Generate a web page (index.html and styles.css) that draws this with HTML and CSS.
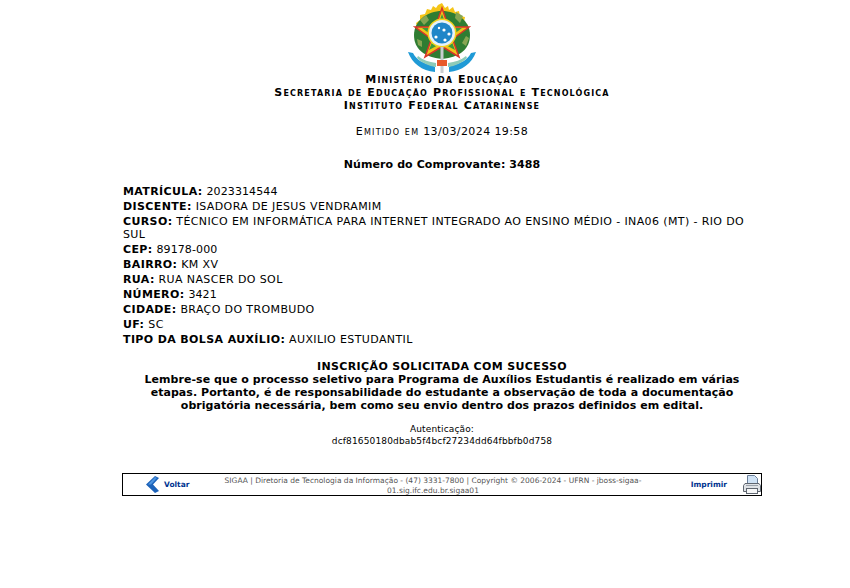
FILE: index.html
```html
<!DOCTYPE html>
<html lang="pt-BR">
<head>
    <meta charset="UTF-8">
    <title>Comprovante</title>
    <link rel="stylesheet" href="styles.css">
</head>
<body>
    <div class="container">
        <div class="header">
            <svg class="brasao" width="68" height="70" viewBox="0 0 68 70">
                <path d="M34 0l3 5 3-2 1 4 4-3 2 5 4-1 1 5 5 1-1 5 4 3-2 5-24 4-24-4-2-7 4-3 0-5 5-1 2-5 4 1 2-4 3 2 2-3z" fill="#f5c518"/>
                <path d="M34 8c15 0 28 10 28 24s-10 22-28 24c-18-2-28-10-28-24s13-24 28-24z" fill="#2f7d32"/>
                <path d="M12 17l6-5 3 5-5 5zM48 9l7 4-3 7-5-5zM9 36l5 2 0 6-4-2zM58 33l3 2-3 8-4-3z" fill="#86a552"/>
                <polygon points="34,5 40.500,24 61,24 44.500,36 51,54 34,43.500 17,54 23.500,36 7,24 27.500,24" fill="#f0c419" stroke="#d8342a" stroke-width="1.5"/>
                <polygon points="34,11 39,25 54,25 42,34 47,47 34,40 21,47 26,34 14,25 29,25" fill="#3c9a3c"/>
                <circle cx="34" cy="30" r="14.500" fill="#f4d21f"/>
                <circle cx="34" cy="30" r="13" fill="#e6f2fa"/>
                <circle cx="34" cy="30" r="10.500" fill="#1f86c8"/>
                <circle cx="28" cy="34" r="1.600" fill="#fff"/>
                <circle cx="36" cy="27" r="1.600" fill="#fff"/>
                <circle cx="41" cy="31" r="1.600" fill="#fff"/>
                <circle cx="31" cy="25" r="1.200" fill="#fff"/>
                <circle cx="37" cy="37" r="1.600" fill="#fff"/>
                <rect x="32.500" y="44" width="3" height="26" fill="#c9cdd0"/>
                <path d="M0 49l5 1c3 6 10 11 19 12l3 2 0 5c-13-1-23-9-27-20zM68 49l-5 1c-3 6-10 11-19 12l-3 2 0 5c13-1 23-9 27-20z" fill="#1f9ad6"/>
                <path d="M10 53c5 4 11 6 18 7l0 4c-7-1-14-4-19-9zM58 53c-5 4-11 6-18 7l0 4c7-1 14-4 19-9z" fill="#8ccbb8"/>
                <rect x="29" y="57" width="10" height="6" fill="#e85a2a"/>
            </svg>
            <div class="orgao">
                Ministério da Educação<br>
                Secretaria de Educação Profissional e Tecnológica<br>
                Instituto Federal Catarinense
            </div>
            <div class="emitido"><span>Emitido em</span> 13/03/2024 19:58</div>
        </div>

        <h3 class="comprovante">Número do Comprovante: 3488</h3>

        <div class="dados">
            <div><b>MATRÍCULA:</b> <span class="num">2023314544</span></div>
            <div><b>DISCENTE:</b> ISADORA DE JESUS VENDRAMIM</div>
            <div class="curso"><b>CURSO:</b> <span>TÉCNICO EM INFORMÁTICA PARA INTERNET INTEGRADO AO ENSINO MÉDIO - INA06 (MT) - RIO DO</span><br><span>SUL</span></div>
            <div><b>CEP:</b> <span class="num">89178-000</span></div>
            <div><b>BAIRRO:</b> KM XV</div>
            <div><b>RUA:</b> RUA NASCER DO SOL</div>
            <div><b>NÚMERO:</b> <span class="num">3421</span></div>
            <div><b>CIDADE:</b> BRAÇO DO TROMBUDO</div>
            <div><b>UF:</b> SC</div>
            <div><b>TIPO DA BOLSA AUXÍLIO:</b> AUXILIO ESTUDANTIL</div>
        </div>

        <div class="sucesso">
            <div class="sucesso-titulo">INSCRIÇÃO SOLICITADA COM SUCESSO</div>
            Lembre-se que o processo seletivo para Programa de Auxílios Estudantis é realizado em várias etapas. Portanto, é de responsabilidade do estudante a observação de toda a documentação obrigatória necessária, bem como seu envio dentro dos prazos definidos em edital.
        </div>

        <div class="autenticacao">
            Autenticação:<br>
            dcf81650180dbab5f4bcf27234dd64fbbfb0d758
        </div>

        <div class="rodape">
            <a class="voltar">
                <svg width="14" height="17" viewBox="0 0 14 17">
                    <path d="M9 0l4 2-6 6.500 6 6.500-4 2-9-8.500z" fill="#1c62b9"/>
                    <path d="M9 1l2 1-6 6.500-3 0z" fill="#4d94e0"/>
                </svg>
                <span>Voltar</span>
            </a>
            <div class="sistema">SIGAA | Diretoria de Tecnologia da Informação - (47) 3331-7800 | Copyright © 2006-2024 - UFRN - jboss-sigaa-01.sig.ifc.edu.br.sigaa01</div>
            <a class="imprimir">
                <span>Imprimir</span>
                <svg width="18" height="19" viewBox="0 0 18 19">
                    <path d="M4.500 .5h7l3 3v7h-10z" fill="#cfe2f5" stroke="#6b7f99"/>
                    <path d="M2 8.500h14l1.500 2v6h-17v-6z" fill="#dfe2e6" stroke="#5f6670"/>
                    <rect x="3.500" y="13.500" width="11" height="5" fill="#f6f7f8" stroke="#5f6670"/>
                    <path d="M3 10.500h12" stroke="#9aa2ab"/>
                </svg>
            </a>
        </div>
    </div>
</body>
</html>
```

FILE: styles.css
```css
body {
    margin: 0;
    background-color: #fff;
    color: #000;
    font-family: "DejaVu Sans", Verdana, sans-serif;
    font-size: 11px;
}

.container {
    width: 640px;
    margin-left: 122px;
    padding-top: 3px;
}

.header {
    text-align: center;
}

.brasao {
    display: block;
    margin: 0 auto;
}

.orgao {
    font-variant: small-caps;
    font-weight: bold;
    letter-spacing: 1.14px;
    line-height: 13px;
}

.emitido {
    letter-spacing: 0.4px;
    line-height: 15px;
    margin-top: 12px;
}

.emitido span {
    font-variant: small-caps;
    letter-spacing: 1.2px;
}

.comprovante {
    font-size: 11px;
    letter-spacing: 0.1px;
    line-height: 15px;
    margin: 18px 0 12px;
    text-align: center;
}

.dados {
    margin-left: 1px;
    letter-spacing: 0.38px;
    line-height: 15px;
}

.num {
    letter-spacing: 0.1px;
}

.curso {
    line-height: 13px;
    padding: 1px 0;
}

.sucesso {
    margin-top: 13px;
    font-weight: bold;
    letter-spacing: 0.05px;
    line-height: 13px;
    text-align: center;
}

.sucesso-titulo {
    letter-spacing: 0.37px;
}

.autenticacao {
    margin-top: 11px;
    font-size: 9px;
    letter-spacing: 0.15px;
    line-height: 12px;
    text-align: center;
}

.rodape {
    margin-top: 26px;
    height: 21px;
    border: 1px solid #000;
    display: flex;
    align-items: center;
    font-size: 7.5px;
}

.voltar, .imprimir {
    display: flex;
    align-items: center;
    font-weight: bold;
    color: #003390;
}

.voltar {
    width: 91px;
    padding-left: 23px;
    gap: 4px;
    box-sizing: border-box;
}

.imprimir {
    width: 109px;
    justify-content: flex-end;
    gap: 16px;
    box-sizing: border-box;
}

.sistema {
    flex: 1;
    text-align: center;
    line-height: 10px;
    color: #555;
    align-self: flex-start;
    padding-top: 2px;
}
```
